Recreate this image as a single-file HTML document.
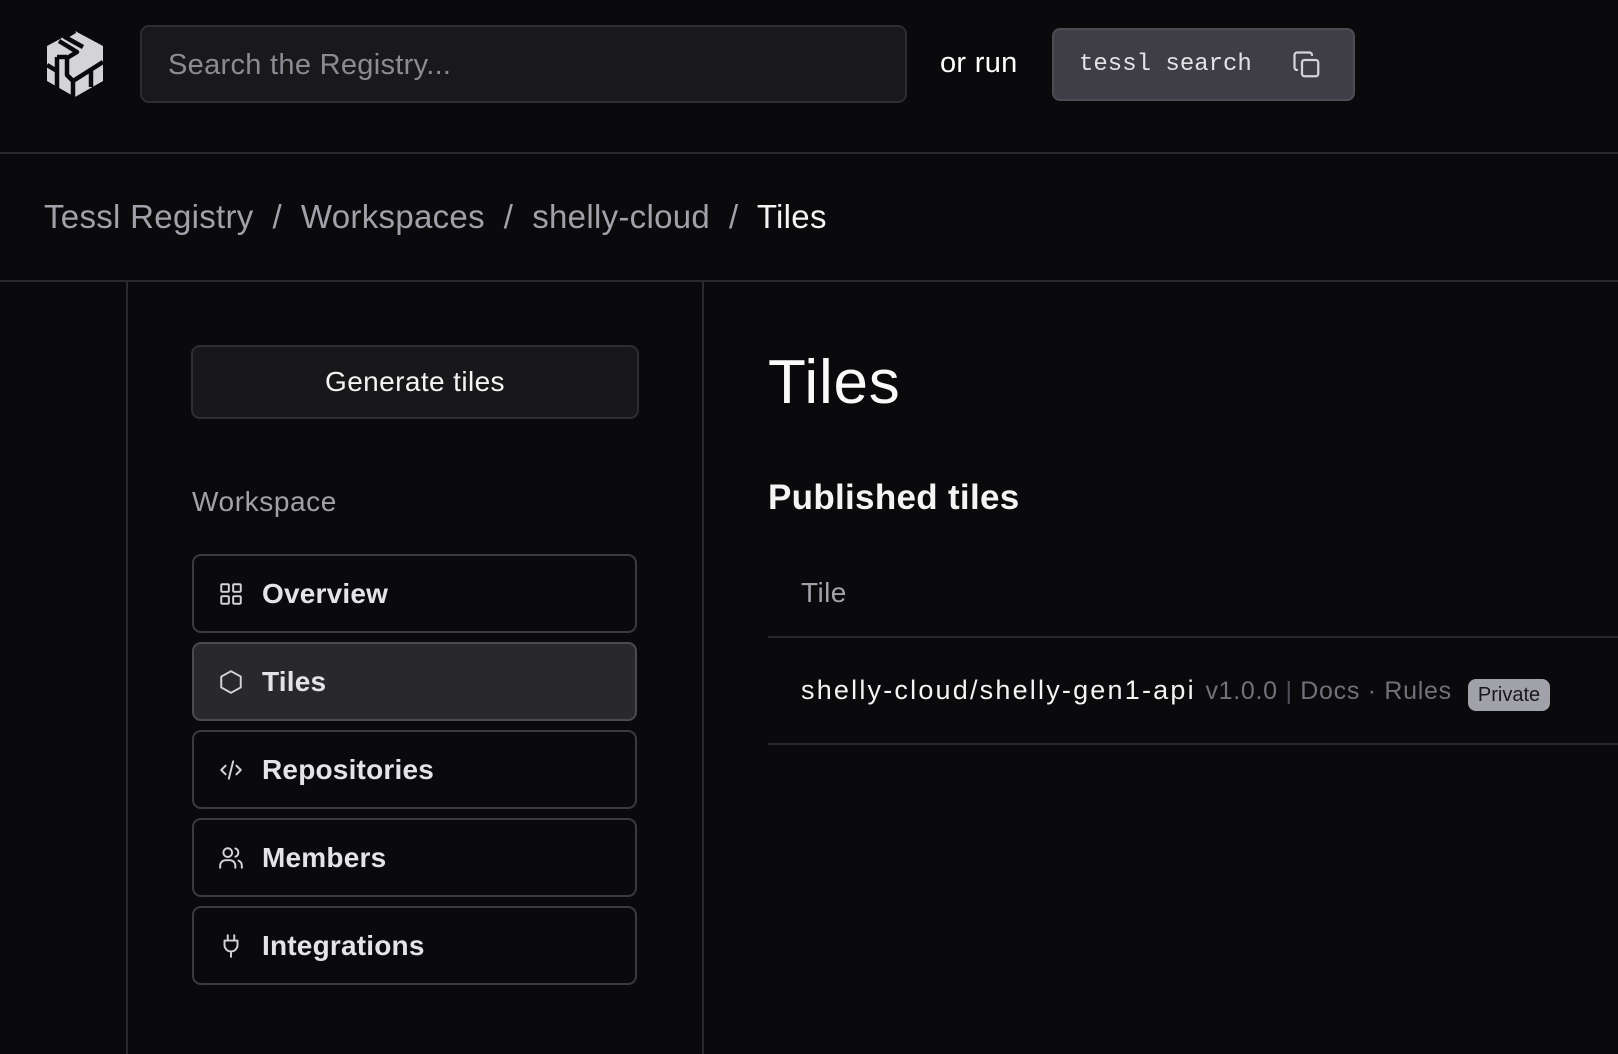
<!DOCTYPE html>
<html><head><meta charset="utf-8"><style>
*{box-sizing:border-box;margin:0;padding:0}
body{width:1618px;height:1054px;background:#0a0a0c;color:#e4e4e7;font-family:"Liberation Sans",sans-serif;position:relative;overflow:hidden}
.a{position:absolute}
.nav{position:absolute;left:192px;width:445px;height:79px;border:2px solid #3a3a40;border-radius:9px;display:flex;align-items:center;padding-left:24px;font-size:28px;font-weight:bold;color:#e4e4e7;letter-spacing:0.2px}
.nav svg{width:26px;height:26px;margin-right:18px;fill:none;stroke:#d4d4d8;stroke-width:1.8;stroke-linecap:round;stroke-linejoin:round}
</style></head><body>
<svg class="a" style="left:43px;top:29px" width="64" height="70" viewBox="0 0 64 70">
<path d="M32 2 L60 17 L60 52 L32 68 L4 52 L4 17 Z" fill="#d4d4d8"/>
<path d="M16 12 L34 23 L24 29 L24 46 L30 52 L60 33 M4 36 L14 42 M14 28 L14 64 M24 28 L14 28 M30 52 L30 68 M48 40 L48 58 M32 2 L22 8 L40 18" stroke="#0a0a0c" stroke-width="4.5" fill="none" stroke-linejoin="round"/>
</svg>
<div class="a" style="left:140px;top:25px;width:767px;height:78px;background:#19191c;border:2px solid #2c2c31;border-radius:9px;font-size:29px;color:#8b8b92;padding:22px 0 0 26px;letter-spacing:0.3px">Search the Registry...</div>
<div class="a" style="left:940px;top:47px;font-size:29px;color:#fff;letter-spacing:0.3px">or run</div>
<div class="a" style="left:1052px;top:28px;width:303px;height:73px;background:#3f3e47;border:2px solid #4d4c55;border-radius:8px;font-family:'Liberation Mono',monospace;font-size:24px;color:#e4e4e7;padding:21px 0 0 25px">tessl search</div>
<svg class="a" style="left:1292px;top:50px" width="30" height="30" viewBox="0 0 24 24" fill="none" stroke="#d4d4d8" stroke-width="1.8" stroke-linecap="round" stroke-linejoin="round"><rect x="8" y="8" width="13" height="13" rx="2"/><path d="M4 16c-1 0-2-1-2-2V4c0-1 1-2 2-2h10c1 0 2 1 2 2"/></svg>
<div class="a" style="left:0;top:152px;width:1618px;height:2px;background:#2a2a2e"></div>
<div class="a" style="left:44px;top:198px;font-size:33px;color:#a1a1aa;white-space:pre;letter-spacing:0.3px">Tessl Registry  /  Workspaces  /  shelly-cloud  /  <span style="color:#f4f4f5">Tiles</span></div>
<div class="a" style="left:0;top:280px;width:1618px;height:2px;background:#2a2a2e"></div>
<div class="a" style="left:126px;top:281px;width:2px;height:773px;background:#2a2a2e"></div>
<div class="a" style="left:702px;top:281px;width:2px;height:773px;background:#2a2a2e"></div>
<div class="a" style="left:191px;top:345px;width:448px;height:74px;background:#18181b;border:2px solid #2e2e33;border-radius:9px;font-size:28px;color:#f4f4f5;text-align:center;line-height:70px;letter-spacing:0.4px">Generate tiles</div>
<div class="a" style="left:192px;top:486px;font-size:28px;color:#a1a1aa;letter-spacing:0.6px">Workspace</div>
<div class="nav" style="top:554px"><svg viewBox="0 0 24 24"><rect x="3" y="3" width="7" height="7" rx="1"/><rect x="14" y="3" width="7" height="7" rx="1"/><rect x="3" y="14" width="7" height="7" rx="1"/><rect x="14" y="14" width="7" height="7" rx="1"/></svg>Overview</div>
<div class="nav" style="top:642px;background:#29292c;border-color:#4a4a50"><svg viewBox="0 0 24 24"><path d="M12 2 L21 7 L21 17 L12 22 L3 17 L3 7 Z"/></svg>Tiles</div>
<div class="nav" style="top:730px"><svg viewBox="0 0 24 24"><path d="M7 8 L3 12 L7 16 M17 8 L21 12 L17 16 M14 4 L10 20"/></svg>Repositories</div>
<div class="nav" style="top:818px"><svg viewBox="0 0 24 24"><circle cx="9" cy="7" r="4"/><path d="M2 21v-2a5 5 0 0 1 5-5h4a5 5 0 0 1 5 5v2M16 3.2a4 4 0 0 1 0 7.6M22 21v-2a5 5 0 0 0-3-4.6"/></svg>Members</div>
<div class="nav" style="top:906px"><svg viewBox="0 0 24 24"><path d="M9 2v5M15 2v5M6 7h12v4a6 6 0 0 1-12 0z M12 17v5"/></svg>Integrations</div>
<div class="a" style="left:768px;top:347px;font-size:62px;color:#fafafa;letter-spacing:0.8px">Tiles</div>
<div class="a" style="left:768px;top:478px;font-size:35px;font-weight:bold;color:#f4f4f5;letter-spacing:0.3px">Published tiles</div>
<div class="a" style="left:801px;top:577px;font-size:28px;color:#a1a1aa;letter-spacing:0.4px">Tile</div>
<div class="a" style="left:768px;top:636px;width:850px;height:2px;background:#2a2a2e"></div>
<div class="a" style="left:801px;top:675px;font-size:27px;color:#f4f4f5;white-space:pre;letter-spacing:2.2px">shelly-cloud/shelly-gen1-api <span style="font-size:25px;color:#71717a;letter-spacing:0.7px">v1.0.0 <span style="color:#52525b">|</span> Docs · Rules</span></div>
<div class="a" style="left:1468px;top:679px;width:82px;height:32px;background:#a1a1aa;border-radius:8px;font-size:20px;color:#18181b;text-align:center;line-height:32px">Private</div>
<div class="a" style="left:768px;top:743px;width:850px;height:2px;background:#2a2a2e"></div>
</body></html>
